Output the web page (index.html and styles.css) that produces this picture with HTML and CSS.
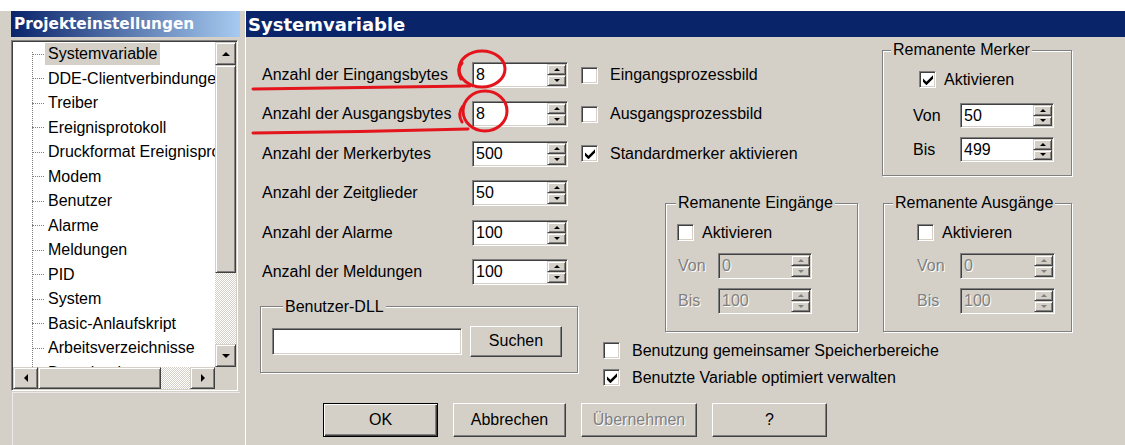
FILE: index.html
```html
<!DOCTYPE html>
<html lang="de">
<head>
<meta charset="utf-8">
<title>Projekteinstellungen – Systemvariable</title>
<link rel="stylesheet" href="styles.css">
</head>
<body>
<div class="page">
  <div class="strip"></div>
  <div class="dialog">
    <aside class="nav">
      <div class="caption caption-nav">Projekteinstellungen</div>
      <div class="tree">
        <ul class="tree-list">
          <li class="selected"><span>Systemvariable</span></li>
          <li><span>DDE-Clientverbindungen</span></li>
          <li><span>Treiber</span></li>
          <li><span>Ereignisprotokoll</span></li>
          <li><span>Druckformat Ereignisprotokoll</span></li>
          <li><span>Modem</span></li>
          <li><span>Benutzer</span></li>
          <li><span>Alarme</span></li>
          <li><span>Meldungen</span></li>
          <li><span>PID</span></li>
          <li><span>System</span></li>
          <li><span>Basic-Anlaufskript</span></li>
          <li><span>Arbeitsverzeichnisse</span></li>
          <li><span>Datenbank</span></li>
        </ul>
        <div class="vscroll">
          <div class="sb-btn"><i class="tri up"></i></div>
          <div class="sb-thumb"></div>
          <div class="sb-track"></div>
          <div class="sb-btn"><i class="tri down"></i></div>
        </div>
        <div class="hscroll">
          <div class="sb-btn"><i class="tri left"></i></div>
          <div class="sb-thumb"></div>
          <div class="sb-track"></div>
          <div class="sb-btn"><i class="tri right"></i></div>
        </div>
        <div class="sb-corner"></div>
      </div>
      <div class="nav-foot"></div>
    </aside>

    <main class="pane">
      <div class="caption caption-pane">Systemvariable</div>
      <div class="form">
        <div class="col-counts">
          <div class="rows">
            <div class="field"><label>Anzahl der Eingangsbytes</label><div class="spin"><span class="val">8</span><span class="arrows"><i></i><i></i></span></div></div>
            <div class="field"><label>Anzahl der Ausgangsbytes</label><div class="spin"><span class="val">8</span><span class="arrows"><i></i><i></i></span></div></div>
            <div class="field"><label>Anzahl der Merkerbytes</label><div class="spin"><span class="val">500</span><span class="arrows"><i></i><i></i></span></div></div>
            <div class="field"><label>Anzahl der Zeitglieder</label><div class="spin"><span class="val">50</span><span class="arrows"><i></i><i></i></span></div></div>
            <div class="field"><label>Anzahl der Alarme</label><div class="spin"><span class="val">100</span><span class="arrows"><i></i><i></i></span></div></div>
            <div class="field"><label>Anzahl der Meldungen</label><div class="spin"><span class="val">100</span><span class="arrows"><i></i><i></i></span></div></div>
          </div>
          <fieldset class="group group-dll">
            <legend>Benutzer-DLL</legend>
            <div class="dll-row">
              <div class="edit"></div>
              <button class="btn btn-search" type="button">Suchen</button>
            </div>
          </fieldset>
        </div>

        <div class="side">
          <div class="side-top">
            <div class="checks">
              <div class="check wide"><span class="cb"></span>Eingangsprozessbild</div>
              <div class="check wide"><span class="cb"></span>Ausgangsprozessbild</div>
              <div class="check wide"><span class="cb"><svg viewBox="0 0 7 7"><polygon points="0,2.4 2.4,4.8 7,0.2 7,2.6 2.4,7.2 0,4.8"/></svg></span>Standardmerker aktivieren</div>
            </div>
            <fieldset class="group group-merker">
              <legend>Remanente Merker</legend>
              <div class="check in-group"><span class="cb"><svg viewBox="0 0 7 7"><polygon points="0,2.4 2.4,4.8 7,0.2 7,2.6 2.4,7.2 0,4.8"/></svg></span>Aktivieren</div>
              <div class="spinrow first"><span class="lbl">Von</span><div class="spin"><span class="val">50</span><span class="arrows"><i></i><i></i></span></div></div>
              <div class="spinrow"><span class="lbl">Bis</span><div class="spin"><span class="val">499</span><span class="arrows"><i></i><i></i></span></div></div>
            </fieldset>
          </div>

          <div class="side-mid">
            <fieldset class="group group-in">
              <legend>Remanente Eingänge</legend>
              <div class="check in-group"><span class="cb"></span>Aktivieren</div>
              <div class="spinrow first"><span class="lbl dis">Von</span><div class="spin off"><span class="val">0</span><span class="arrows"><i></i><i></i></span></div></div>
              <div class="spinrow"><span class="lbl dis">Bis</span><div class="spin off"><span class="val">100</span><span class="arrows"><i></i><i></i></span></div></div>
            </fieldset>
            <fieldset class="group group-out">
              <legend>Remanente Ausgänge</legend>
              <div class="check in-group"><span class="cb"></span>Aktivieren</div>
              <div class="spinrow first"><span class="lbl dis">Von</span><div class="spin off"><span class="val">0</span><span class="arrows"><i></i><i></i></span></div></div>
              <div class="spinrow"><span class="lbl dis">Bis</span><div class="spin off"><span class="val">100</span><span class="arrows"><i></i><i></i></span></div></div>
            </fieldset>
          </div>

          <div class="side-bottom">
            <div class="check wide"><span class="cb"></span>Benutzung gemeinsamer Speicherbereiche</div>
            <div class="check wide"><span class="cb"><svg viewBox="0 0 7 7"><polygon points="0,2.4 2.4,4.8 7,0.2 7,2.6 2.4,7.2 0,4.8"/></svg></span>Benutzte Variable optimiert verwalten</div>
          </div>
        </div>
      </div>

      <div class="buttons">
        <button class="btn btn-ok default" type="button">OK</button>
        <button class="btn btn-cancel" type="button">Abbrechen</button>
        <button class="btn btn-apply" type="button" disabled>Übernehmen</button>
        <button class="btn btn-help" type="button">?</button>
      </div>
    </main>
  </div>

  <!-- hand-drawn red highlights over the byte counts -->
  <svg class="marks" viewBox="0 0 1125 445" width="1125" height="445">
    <g fill="none" stroke="#e3141b" stroke-width="3" stroke-linecap="round">
      <ellipse cx="482" cy="69" rx="23" ry="18"/>
      <ellipse cx="485" cy="111" rx="22" ry="20"/>
      <path d="M253 89 Q360 88 470 86"/>
      <path d="M253 133 Q360 132 468 129"/>
      <path d="M462 63 Q456 70 461 79"/>
      <path d="M463 106 Q457 114 462 122"/>
    </g>
  </svg>
</div>
</body>
</html>
```

FILE: styles.css
```css
* { box-sizing: border-box; }

html, body { margin: 0; }

body {
  font-family: "Liberation Sans", Arial, sans-serif;
  font-size: 16px;
  color: #000;
  background: #d4d0c8;
}

.page {
  position: relative;
  width: 1125px;
  height: 445px;
  overflow: hidden;
}

.strip { height: 11px; background: #fff; }

.dialog { display: flex; height: 434px; }

/* ---------- navigation tree ---------- */
.nav {
  width: 243px;
  flex: none;
  padding-left: 11px;
  display: flex;
  flex-direction: column;
}

.caption {
  height: 26px;
  display: flex;
  align-items: center;
  color: #fff;
  font-family: "DejaVu Sans", sans-serif;
  font-weight: bold;
  white-space: nowrap;
  overflow: hidden;
}

.caption-nav {
  margin-right: 3px;
  padding-left: 3px;
  font-size: 15.3px;
  background: linear-gradient(to right, #0a246a, #a6caf0);
}

.tree {
  margin: 3px 5px 0 0;
  height: 351px;
  display: grid;
  grid-template-columns: 1fr 21px;
  grid-template-rows: 1fr 22px;
  padding: 1px;
  background: #fff;
  border: 1px solid;
  border-color: #808080 #fff #fff #808080;
  box-shadow: inset 1px 1px 0 #404040, inset -1px -1px 0 #d4d0c8;
}

.nav-foot {
  flex: 1;
  margin: 1px 3px 0 1px;
  border-top: 1px solid #ecebe7;
  border-left: 1px solid #ecebe7;
}

.tree-list {
  margin: 0;
  padding: 0;
  list-style: none;
  overflow: hidden;
  background-image: repeating-linear-gradient(to bottom, #808080 0 1px, transparent 1px 2px);
  background-size: 1px 100%;
  background-position: 19px 10px;
  background-repeat: no-repeat;
}

.tree-list li {
  height: 24.5px;
  display: flex;
  align-items: center;
  white-space: nowrap;
}

.tree-list li::before {
  content: "";
  flex: none;
  width: 12px;
  margin-left: 19px;
  border-top: 1px dotted #808080;
}

.tree-list li span {
  margin-left: 1px;
  padding: 0 3px;
  line-height: 22px;
}

.tree-list li.selected span { background: #d4d0c8; }

.sb-btn,
.sb-thumb {
  background: #d4d0c8;
  border: 1px solid;
  border-color: #d4d0c8 #404040 #404040 #d4d0c8;
  box-shadow: inset 1px 1px 0 #fff, inset -1px -1px 0 #808080;
  display: flex;
  align-items: center;
  justify-content: center;
}

.sb-track {
  flex: 1;
  background: repeating-conic-gradient(#d4d0c8 0 25%, #fff 0 50%) 0 0 / 2px 2px;
}

.vscroll { display: flex; flex-direction: column; }
.vscroll .sb-btn { height: 23px; }
.vscroll .sb-thumb { height: 208px; }

.hscroll { display: flex; }
.hscroll .sb-btn { width: 25px; }
.hscroll .sb-thumb { width: 123px; }

.sb-corner { background: #d4d0c8; }

.tri { width: 0; height: 0; border: 4px solid transparent; }
.tri.up { border-top-width: 0; border-bottom-color: #000; }
.tri.down { border-bottom-width: 0; border-top-color: #000; }
.tri.left { border-left-width: 0; border-right-color: #000; }
.tri.right { border-right-width: 0; border-left-color: #000; }

/* ---------- settings pane ---------- */
.pane {
  flex: 1;
  margin-left: 2px;
  border-left: 1px solid #fff;
  display: flex;
  flex-direction: column;
}

.caption-pane {
  padding-left: 2px;
  font-size: 18px;
  background: #0a246a;
}

.form { height: 366px; display: flex; }

.col-counts {
  width: 334px;
  flex: none;
  padding: 25px 0 0 16px;
}

.rows { display: flex; flex-direction: column; gap: 13.4px; }

.field { display: flex; align-items: center; height: 26px; }
.field label { width: 210px; white-space: nowrap; }

.spin {
  width: 96px;
  height: 26px;
  flex: none;
  display: flex;
  padding: 1px;
  background: #fff;
  border: 1px solid;
  border-color: #808080 #fff #fff #808080;
  box-shadow: inset 1px 1px 0 #404040, inset -1px -1px 0 #d4d0c8;
}

.val { flex: 1; padding-left: 2px; line-height: 22px; }

.arrows { width: 19px; display: flex; flex-direction: column; }

.arrows i {
  flex: 1;
  background: #d4d0c8;
  border: 1px solid;
  border-color: #d4d0c8 #404040 #404040 #d4d0c8;
  box-shadow: inset 1px 1px 0 #fff, inset -1px -1px 0 #808080;
  display: flex;
  align-items: center;
  justify-content: center;
}

.arrows i::after {
  content: "";
  border-left: 3px solid transparent;
  border-right: 3px solid transparent;
}
.arrows i:first-child::after { border-bottom: 3px solid #000; }
.arrows i:last-child::after { border-top: 3px solid #000; }

.spin.off { background: #d4d0c8; }
.spin.off .val { color: #808080; text-shadow: 1px 1px 0 #fff; }
.spin.off .arrows i:first-child::after { border-bottom-color: #808080; }
.spin.off .arrows i:last-child::after { border-top-color: #808080; }

.dis { color: #808080; text-shadow: 1px 1px 0 #fff; }

/* group boxes */
.group {
  margin: 0;
  padding: 0;
  min-width: 0;
  border: 1px solid #808080;
  box-shadow: 1px 1px 0 #fff, inset 1px 1px 0 #fff;
}

.group legend {
  margin-left: 8px;
  padding: 0 2px;
  line-height: 18px;
  background: #d4d0c8;
  white-space: nowrap;
}

.group-dll {
  margin: 13px 0 0 -2px;
  width: 318px;
  padding: 10px 15px 15px 11px;
}
.group-dll legend { margin-left: 11px; }

.dll-row { display: flex; align-items: center; gap: 8px; }

.edit {
  width: 190px;
  height: 27px;
  background: #fff;
  border: 1px solid;
  border-color: #808080 #fff #fff #808080;
  box-shadow: inset 1px 1px 0 #404040, inset -1px -1px 0 #d4d0c8;
}

/* checkboxes */
.check { display: flex; align-items: center; gap: 8px; white-space: nowrap; }
.check.wide { gap: 12px; }

.cb {
  width: 17px;
  height: 17px;
  flex: none;
  background: #fff;
  border: 1px solid;
  border-color: #808080 #fff #fff #808080;
  box-shadow: inset 1px 1px 0 #404040, inset -1px -1px 0 #d4d0c8;
  display: flex;
  align-items: center;
  justify-content: center;
}

.cb svg { width: 10px; height: 10px; fill: #000; }

.side { flex: 1; display: flex; flex-direction: column; }

.side-top { display: flex; }

.checks {
  width: 302px;
  flex: none;
  padding: 25px 0 0 1px;
  display: flex;
  flex-direction: column;
  gap: 13.4px;
}
.checks .check { height: 26px; }

.check.in-group { height: 17px; margin-top: 12px; }

.spinrow { display: flex; align-items: center; height: 25px; margin-top: 9px; }
.spinrow.first { margin-top: 15px; }

.group-merker { margin-top: 4px; width: 190px; padding-bottom: 13px; }
.group-merker .check { margin-left: 36px; }
.group-merker .spinrow { margin-left: 30px; }
.group-merker .lbl { width: 47px; }
.group-merker .spin { width: 94px; height: 25px; }

.side-mid { display: flex; margin-top: 18px; }

.group-in, .group-out { padding-bottom: 17px; }
.group-in .spinrow, .group-out .spinrow { height: 26px; }
.group-in .spinrow.first, .group-out .spinrow.first { margin-top: 12px; }

.group-in { margin-left: 85px; width: 193px; }
.group-in legend { margin-left: 10px; }
.group-in .check { margin-left: 11px; }
.group-in .spinrow { margin-left: 12px; }
.group-in .lbl { width: 40px; }
.group-in .spin { width: 94px; }

.group-out { margin-left: 25px; width: 189px; }
.group-out legend { margin-left: 9px; }
.group-out .check { margin-left: 33px; }
.group-out .spinrow { margin-left: 33px; }
.group-out .lbl { width: 43px; }
.group-out .spin { width: 95px; }

.side-bottom {
  margin-top: 10px;
  padding-left: 23px;
  display: flex;
  flex-direction: column;
  gap: 10px;
}
.side-bottom .check { height: 17px; }

/* push buttons */
.buttons { display: flex; gap: 15px; padding-left: 77px; }

.btn {
  font: inherit;
  height: 34px;
  padding: 0;
  color: #000;
  background: #d4d0c8;
  border: 1px solid;
  border-color: #fff #404040 #404040 #fff;
  box-shadow: inset -1px -1px 0 #808080;
}

.btn.default {
  border-color: #000;
  box-shadow: inset 1px 1px 0 #fff, inset -1px -1px 0 #404040, inset -2px -2px 0 #808080;
}

.btn:disabled { color: #808080; text-shadow: 1px 1px 0 #fff; }

.btn-search { width: 92px; height: 31px; }
.btn-ok { width: 115px; }
.btn-cancel { width: 113px; }
.btn-apply { width: 116px; }
.btn-help { width: 115px; }

.marks {
  position: absolute;
  left: 0;
  top: 0;
  pointer-events: none;
}
```
